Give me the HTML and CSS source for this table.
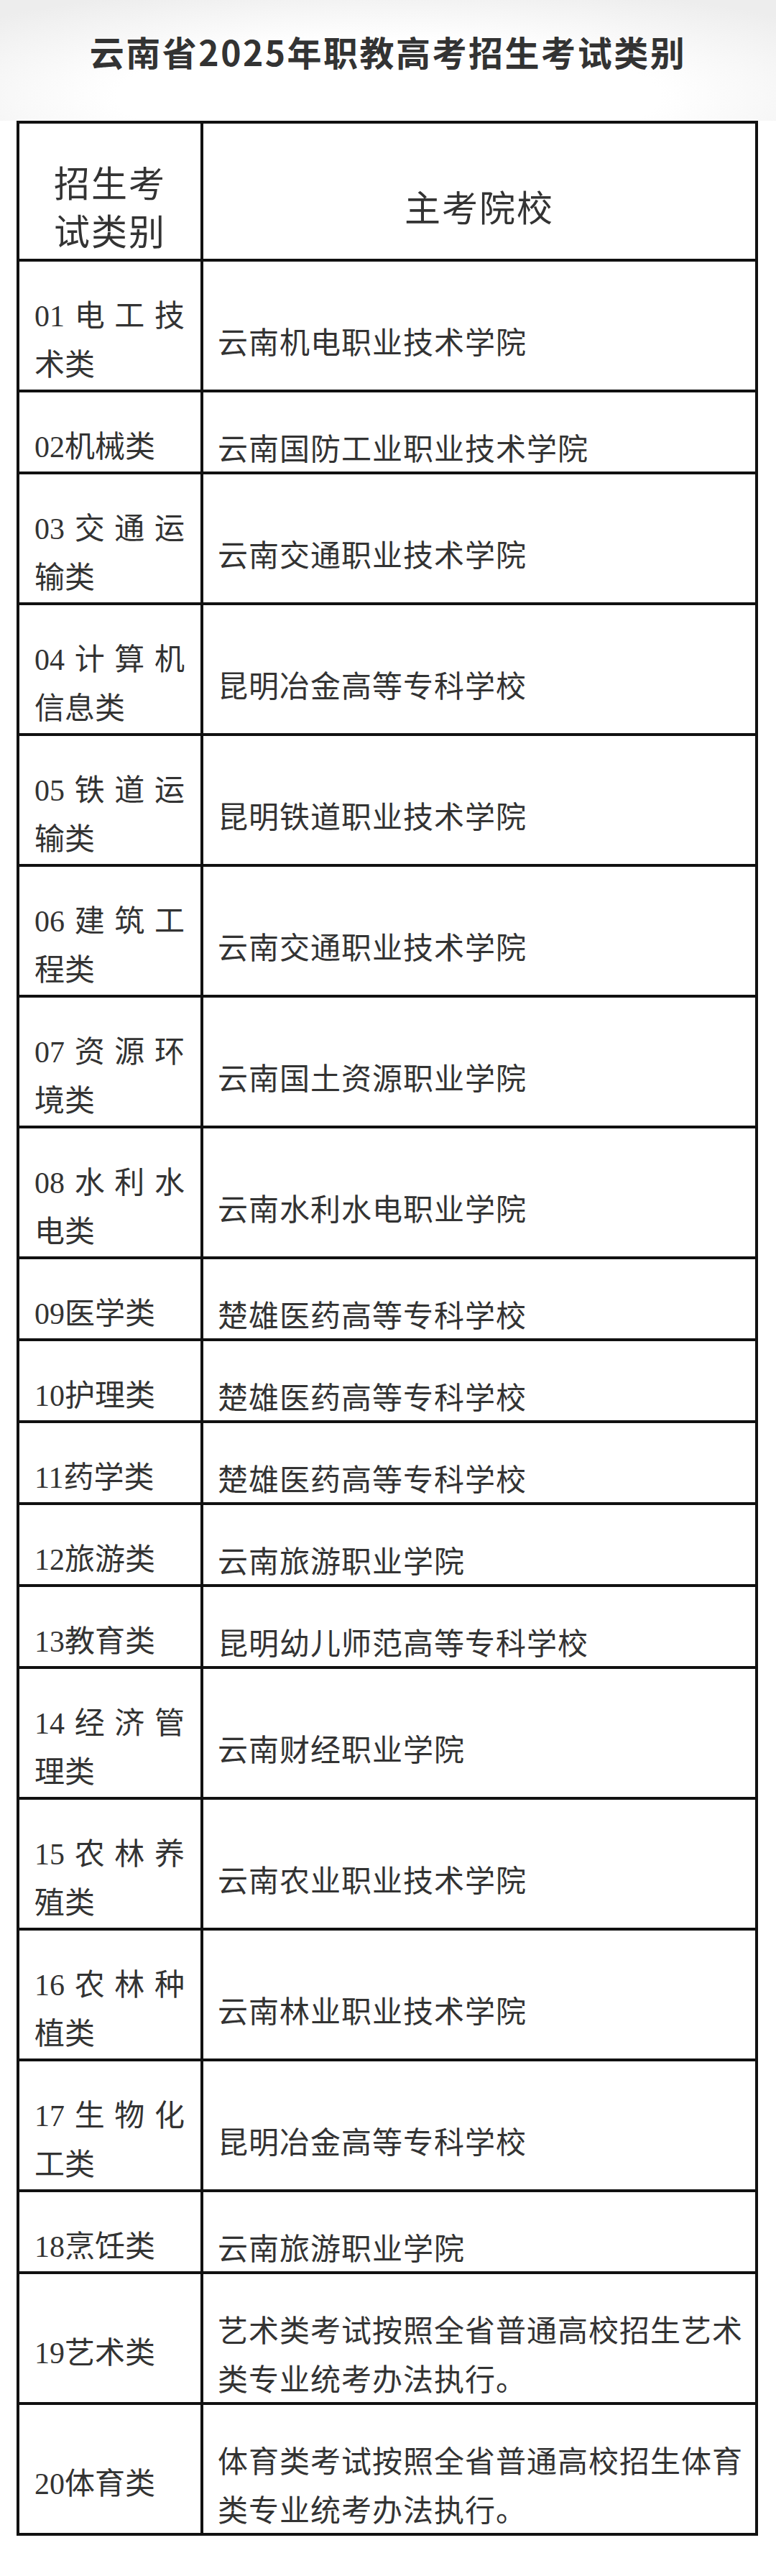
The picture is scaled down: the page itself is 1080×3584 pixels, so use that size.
FILE: index.html
```html
<!DOCTYPE html>
<html lang="zh-CN">
<head>
<meta charset="utf-8">
<title>云南省2025年职教高考招生考试类别</title>
<link rel="stylesheet" href="styles.css">
</head>
<body>
<div class="title-bar">
  <h1 class="title">云南省2025年职教高考招生考试类别</h1>
</div>
<table class="exam-table">
  <colgroup>
    <col class="col-cat">
    <col class="col-school">
  </colgroup>
  <thead>
    <tr>
      <th class="cat">招生考<br>试类别</th>
      <th class="school">主考院校</th>
    </tr>
  </thead>
  <tbody>
    <tr><td class="cat">01电工技术类</td><td class="school">云南机电职业技术学院</td></tr>
    <tr><td class="cat">02机械类</td><td class="school">云南国防工业职业技术学院</td></tr>
    <tr><td class="cat">03交通运输类</td><td class="school">云南交通职业技术学院</td></tr>
    <tr><td class="cat">04计算机信息类</td><td class="school">昆明冶金高等专科学校</td></tr>
    <tr><td class="cat">05铁道运输类</td><td class="school">昆明铁道职业技术学院</td></tr>
    <tr><td class="cat">06建筑工程类</td><td class="school">云南交通职业技术学院</td></tr>
    <tr><td class="cat">07资源环境类</td><td class="school">云南国土资源职业学院</td></tr>
    <tr><td class="cat">08水利水电类</td><td class="school">云南水利水电职业学院</td></tr>
    <tr><td class="cat">09医学类</td><td class="school">楚雄医药高等专科学校</td></tr>
    <tr><td class="cat">10护理类</td><td class="school">楚雄医药高等专科学校</td></tr>
    <tr><td class="cat">11药学类</td><td class="school">楚雄医药高等专科学校</td></tr>
    <tr><td class="cat">12旅游类</td><td class="school">云南旅游职业学院</td></tr>
    <tr><td class="cat">13教育类</td><td class="school">昆明幼儿师范高等专科学校</td></tr>
    <tr><td class="cat">14经济管理类</td><td class="school">云南财经职业学院</td></tr>
    <tr><td class="cat">15农林养殖类</td><td class="school">云南农业职业技术学院</td></tr>
    <tr><td class="cat">16农林种植类</td><td class="school">云南林业职业技术学院</td></tr>
    <tr><td class="cat">17生物化工类</td><td class="school">昆明冶金高等专科学校</td></tr>
    <tr><td class="cat">18烹饪类</td><td class="school">云南旅游职业学院</td></tr>
    <tr><td class="cat">19艺术类</td><td class="school">艺术类考试按照全省普通高校招生艺术类专业统考办法执行。</td></tr>
    <tr><td class="cat">20体育类</td><td class="school">体育类考试按照全省普通高校招生体育类专业统考办法执行。</td></tr>
  </tbody>
</table>
</body>
</html>
```
FILE: styles.css
```css
html, body {
  margin: 0;
  padding: 0;
  background: #ffffff;
}

body {
  width: 1080px;
  min-height: 3584px;
  font-family: "Noto Sans CJK SC", "Noto Sans", sans-serif;
  color: #333333;
}

.title-bar {
  box-sizing: border-box;
  height: 168px;
  padding-top: 36px;
  background: radial-gradient(ellipse 70% 95% at 50% 80%, #ffffff 50%, #ededed 100%);
}

.title {
  margin: 0;
  text-align: center;
  font-family: "Noto Sans CJK SC", sans-serif;
  font-weight: 700;
  font-size: 48px;
  line-height: 70px;
  letter-spacing: 2.5px;
  color: #333333;
}

.exam-table {
  margin: 0 25px 0 23px;
  width: 1032px;
  table-layout: fixed;
  border-collapse: collapse;
  border: 4px solid #111111;
}

.col-cat {
  width: 256px;
}

.exam-table th,
.exam-table td {
  border: 4px solid #111111;
  vertical-align: middle;
  color: #333333;
}

.exam-table th {
  font-weight: 400;
  font-size: 50px;
  line-height: 67px;
  letter-spacing: 2px;
  text-align: center;
  padding: 47px 8px 7px 8px;
}

.exam-table td {
  font-size: 42px;
  line-height: 68px;
  letter-spacing: 1px;
  padding: 42px 12px 0 20px;
}

.exam-table td.cat {
  font-family: "Liberation Serif", "Noto Sans CJK SC", serif;
  text-align: justify;
  padding-left: 21px;
  padding-right: 22px;
  letter-spacing: 0;
}

.exam-table td.school {
  font-family: "Noto Sans CJK SC", sans-serif;
  text-align: left;
}
```
